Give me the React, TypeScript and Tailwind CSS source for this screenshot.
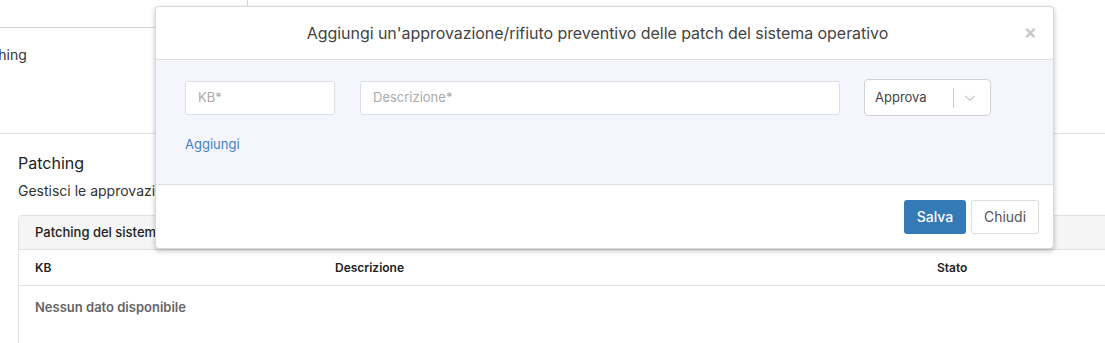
import React from "react";

export default function App() {
  return (
    <div className="relative w-[1105px] h-[343px] overflow-hidden bg-white font-['Inter','Noto_Sans',sans-serif] text-[#333]">
      {/* background page */}
      <div className="h-[134px] border-b border-[#e2e2e2]">
        <div className="w-[248px] h-[28px] border-r border-b border-[#d6d6d6]" />
        <div className="mt-[18px] text-[14px] leading-[18px] text-[#333] -ml-[31px]">Patching</div>
      </div>
      <div className="pl-[18px] pt-[18px]">
        <div className="text-[16px] leading-[22px] text-[#222]">Patching</div>
        <div className="mt-[8px] text-[14px] leading-[18px] text-[#333]">Gestisci le approvazioni preventive delle patch del sistema operativo</div>
        <div className="mt-[15px] w-[1120px] border border-[#e1e1e1] rounded-[4px]">
          <div className="h-[34px] bg-[#f5f5f5] border-b border-[#e1e1e1] flex items-center pl-[16px] text-[13px] font-medium text-[#222]">
            Patching del sistema operativo
          </div>
          <div className="h-[36px] border-b border-[#e1e1e1] grid grid-cols-[300px_602px_1fr] items-center pl-[16px] text-[12px] font-semibold text-[#222]">
            <div>KB</div>
            <div>Descrizione</div>
            <div>Stato</div>
          </div>
          <div className="h-[44px] flex items-center pl-[16px] text-[13px] font-semibold text-[#666]">
            Nessun dato disponibile
          </div>
          <div className="h-[40px]" />
        </div>
      </div>

      {/* modal */}
      <div className="absolute left-[155px] top-[6px] w-[899px] bg-white border border-[#d9d9d9] rounded-[4px] shadow-[0_2px_5px_rgba(0,0,0,0.25)]">
        <div className="relative h-[53px] flex items-center justify-center border-b border-[#e0e0e0] pr-[14px]">
          <span className="text-[16px] tracking-[-0.05px] text-[#444]">Aggiungi un'approvazione/rifiuto preventivo delle patch del sistema operativo</span>
          <span className="absolute right-[16px] top-[15px] text-[20px] leading-[20px] text-[#c8c8c8] font-semibold">×</span>
        </div>
        <div className="bg-[#f5f6fd] h-[125px] pl-[29px] pt-[19px] border-b border-[#e0e0e0]">
          <div className="flex items-center">
            <div className="w-[150px] h-[34px] bg-white border border-[#dcdfe6] rounded-[3px] flex items-center pl-[12px] text-[13px] text-[#aaa]">KB*</div>
            <div className="ml-[25px] w-[480px] h-[34px] bg-white border border-[#dcdfe6] rounded-[3px] flex items-center pl-[12px] text-[13px] text-[#aaa]">Descrizione*</div>
            <div className="ml-[24px] w-[127px] h-[37px] bg-white border border-[#cfd2d9] rounded-[4px] flex items-center">
              <span className="pl-[10px] w-[88px] text-[13px] text-[#444]">Approva</span>
              <span className="w-px h-[20px] bg-[#cccccc]" />
              <svg className="ml-[9px]" width="14" height="14" viewBox="0 0 14 14" fill="none">
                <path d="M2.5 5l4.5 4.5L11.5 5" stroke="#c8c8c8" strokeWidth="1.2" />
              </svg>
            </div>
          </div>
          <div className="mt-[19px] text-[13px] text-[#3d82c2]">Aggiungi</div>
        </div>
        <div className="h-[63px] flex items-center justify-end pr-[14px] gap-[5px]">
          <div className="w-[62px] h-[34px] bg-[#337ab7] rounded-[3px] flex items-center justify-center text-[14px] font-medium text-white">Salva</div>
          <div className="w-[68px] h-[34px] bg-white border border-[#dddddd] rounded-[3px] flex items-center justify-center text-[14px] text-[#555]">Chiudi</div>
        </div>
      </div>
    </div>
  );
}
